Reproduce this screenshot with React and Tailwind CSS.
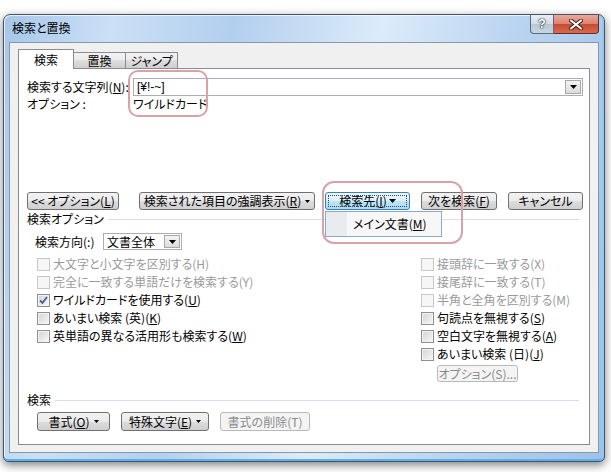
import React from 'react';

const jp = "font-['Noto_Sans_CJK_JP','Noto_Sans_CJK_SC',sans-serif] [font-feature-settings:'palt']";

function U({ children }) {
  return <span className="underline underline-offset-[1px] decoration-[1px]">{children}</span>;
}

function Arrow({ small }) {
  return small ? (
    <svg width="5" height="3" viewBox="0 0 5 3" className="ml-[4px]">
      <polygon points="0,0 5,0 2.5,3" fill="#000" />
    </svg>
  ) : (
    <svg width="7" height="4" viewBox="0 0 7 4">
      <polygon points="0,0 7,0 3.5,4" fill="#000" />
    </svg>
  );
}

function Btn({ children, className = '', disabled, focused, h = 'h-[18px]' }) {
  let look =
    'border-[#707070] bg-[linear-gradient(#f2f2f2_0%,#ebebeb_50%,#dddddd_50%,#cfcfcf_100%)] text-black';
  if (focused)
    look =
      'border-[#3c7fb1] bg-[linear-gradient(#eaf6fd_0%,#d9f0fc_50%,#bee6fd_50%,#a7d9f5_100%)] text-black';
  if (disabled) look = 'border-[#b6babd] bg-[#f4f4f4] text-[#8a8a8a]';
  return (
    <div
      className={`relative flex shrink-0 items-center justify-center rounded-[3px] border text-[12px] leading-none ${h} ${look} ${className}`}
    >
      {focused && <span className="absolute inset-[2px] border border-dotted border-[#444]" />}
      <span className="flex items-center">{children}</span>
    </div>
  );
}

function Check({ checked, disabled, children }) {
  return (
    <div className={`flex h-[18px] items-center ${disabled ? 'text-[#9a9a9a]' : 'text-black'}`}>
      <span
        className={`flex h-[13px] w-[13px] shrink-0 items-center justify-center border ${
          disabled
            ? 'border-[#c7c7c7] bg-[#f6f6f6]'
            : 'border-[#8f8f8f] bg-[linear-gradient(135deg,#d4d4d4,#f7f7f7)] shadow-[inset_0_0_0_1px_#f4f4f4]'
        }`}
      >
        {checked && (
          <svg width="9" height="9" viewBox="0 0 9 9">
            <path d="M1 4.5 L3.5 7 L8 1" fill="none" stroke="#4a5d8f" strokeWidth="1.8" />
          </svg>
        )}
      </span>
      <span className="ml-[3px] whitespace-nowrap">{children}</span>
    </div>
  );
}

function DropBtn() {
  return (
    <div className="flex h-full w-[16px] items-center justify-center border border-[#a8a8a8] bg-[linear-gradient(#f4f4f4,#dcdcdc)]">
      <Arrow />
    </div>
  );
}

function Group({ label }) {
  return (
    <div className="flex h-[16px] items-center">
      <span className="whitespace-nowrap">{label}</span>
      <span className="ml-[4px] mr-[5px] h-px flex-1 bg-[#d5dfe5]" />
    </div>
  );
}

export default function App() {
  return (
    <div className={`h-[472px] w-[611px] overflow-hidden bg-white pl-[3px] pt-[14px] text-[12px] leading-[16px] ${jp}`}>
      <div className="flex h-[448px] w-[602px] flex-col rounded-b-[5px] rounded-t-[7px] border border-[#45546a] bg-[linear-gradient(100deg,#a6c6e9_0%,#cbe0f6_16%,#b2cfee_34%,#dcebfa_56%,#b9d4f0_76%,#9fc1e8_100%)] shadow-[0_3px_10px_rgba(0,0,0,0.5),inset_0_-2px_0_#5cb3ec,inset_-2px_0_0_#8fcaf2,inset_1px_1px_0_rgba(255,255,255,0.7)]">
        {/* title bar */}
        <div className="flex h-[27px] items-start">
          <div className="pl-[8px] pt-[5px] text-[12px] text-black">検索と置換</div>
          <div className="ml-auto mr-[5px] flex">
            <div className="flex h-[19px] w-[24px] items-center justify-center rounded-bl-[4px] border border-t-0 border-[#5b6a7d] bg-[linear-gradient(#e9eef4_0%,#d3dce6_50%,#b9c6d4_50%,#c9d5e1_100%)] text-[13px] font-bold text-white [text-shadow:0_0_1px_#2c3440,0_0_1px_#2c3440,0_0_2px_#2c3440] font-['Liberation_Sans',sans-serif]">
              ?
            </div>
            <div className="flex h-[19px] w-[45px] items-center justify-center rounded-br-[4px] border border-l-0 border-t-0 border-[#6e2a20] bg-[linear-gradient(#eaa899_0%,#d98370_50%,#c74a33_50%,#d66a4f_100%)]">
              <svg width="14" height="11" viewBox="0 0 14 11">
                <path d="M2 1.5 L12 9.5 M12 1.5 L2 9.5" stroke="#3a1a14" strokeWidth="4" strokeLinecap="round" />
                <path d="M2 1.5 L12 9.5 M12 1.5 L2 9.5" stroke="#fff" strokeWidth="2.2" strokeLinecap="round" />
              </svg>
            </div>
          </div>
        </div>

        {/* client area */}
        <div className="mx-[5px] mb-[8px] flex flex-1 flex-col border border-[#8798ad] bg-[#f0f0f0] px-[8px] pb-[7px] pt-[6px]">
          {/* tabs */}
          <div className="flex h-[19px] items-end">
            <div className="relative z-10 -mb-px flex h-[20px] w-[56px] items-center justify-center border border-b-0 border-[#898c95] bg-white">
              検索
            </div>
            <div className="flex h-[16px] w-[52px] items-center justify-center border border-b-0 border-l-0 border-[#898c95] bg-[linear-gradient(#f2f2f2_0%,#ebebeb_50%,#dddddd_50%,#cfcfcf_100%)]">
              置換
            </div>
            <div className="flex h-[16px] w-[52px] items-center justify-center border border-b-0 border-l-0 border-[#898c95] bg-[linear-gradient(#f2f2f2_0%,#ebebeb_50%,#dddddd_50%,#cfcfcf_100%)]">
              ジャンプ
            </div>
          </div>

          {/* tab page */}
          <div className="relative flex flex-1 flex-col border border-[#898c95] bg-white pl-[8px] pr-[5px] pt-[9px]">
            <div className="flex h-[18px] items-center">
              <span className="w-[106px] whitespace-nowrap">
                検索する文字列(<U>N</U>):
              </span>
              <div className="flex h-[18px] w-[450px] items-center justify-between border border-[#abadb3] bg-white pl-[3px] pr-px py-px">
                <span className="font-['Liberation_Sans','Noto_Sans_CJK_JP',sans-serif] text-[12px]">[¥!-~]</span>
                <DropBtn />
              </div>
            </div>
            <div className="flex h-[16px] items-center">
              <span className="w-[106px] whitespace-nowrap">オプション :</span>
              <span>ワイルドカード</span>
            </div>

            <div className="mt-[80px] flex">
              <Btn className="w-[92px]">
                &lt;&lt; オプション(<U>L</U>)
              </Btn>
              <Btn className="ml-[20px] w-[176px]">
                検索された項目の強調表示(<U>R</U>)
                <Arrow small />
              </Btn>
              <Btn className="ml-[10px] w-[85px]" focused>
                検索先(<U>I</U>)
                <span className="ml-[2px]">
                  <Arrow />
                </span>
              </Btn>
              <Btn className="ml-[11px] w-[76px]">
                次を検索(<U>F</U>)
              </Btn>
              <Btn className="ml-[11px] w-[75px]">キャンセル</Btn>
            </div>

            <div className="mt-px">
              <Group label="検索オプション" />
            </div>

            <div className="mt-[6px] flex h-[17px] items-center pl-[8px]">
              <span className="w-[68px] whitespace-nowrap">検索方向(:)</span>
              <div className="flex h-[17px] w-[79px] items-center justify-between border border-[#abadb3] bg-white pl-[3px] pr-px py-px">
                <span>文書全体</span>
                <DropBtn />
              </div>
            </div>

            <div className="mt-[5px] flex pl-[10px]">
              <div className="flex w-[384px] flex-col">
                <Check disabled>大文字と小文字を区別する(H)</Check>
                <Check disabled>完全に一致する単語だけを検索する(Y)</Check>
                <Check checked>
                  ワイルドカードを使用する(<U>U</U>)
                </Check>
                <Check>
                  あいまい検索 (英)(<U>K</U>)
                </Check>
                <Check>
                  英単語の異なる活用形も検索する(<U>W</U>)
                </Check>
              </div>
              <div className="flex flex-col">
                <Check disabled>接頭辞に一致する(X)</Check>
                <Check disabled>接尾辞に一致する(T)</Check>
                <Check disabled>半角と全角を区別する(M)</Check>
                <Check>
                  句読点を無視する(<U>S</U>)
                </Check>
                <Check>
                  空白文字を無視する(<U>A</U>)
                </Check>
                <Check>
                  あいまい検索 (日)(<U>J</U>)
                </Check>
                <Btn className="ml-[16px] mt-[2px] w-[81px]" h="h-[17px]" disabled>
                  オプション(S)...
                </Btn>
              </div>
            </div>

            <div className="mt-[10px]">
              <Group label="検索" />
            </div>

            <div className="mt-[4px] flex pl-[10px]">
              <Btn className="w-[73px]" h="h-[19px]">
                書式(<U>O</U>)
                <Arrow small />
              </Btn>
              <Btn className="ml-[11px] w-[88px]" h="h-[19px]">
                特殊文字(<U>E</U>)
                <Arrow small />
              </Btn>
              <Btn className="ml-[11px] w-[90px]" h="h-[19px]" disabled>
                書式の削除(T)
              </Btn>
            </div>

            {/* drop-down menu of 検索先 */}
            <div className="absolute left-[306px] top-[142px] z-20 flex h-[26px] w-[117px] border border-[#86a9d6] bg-[#f7f7f7]">
              <div className="w-[21px] bg-[#e9ecee]" />
              <div className="flex items-center pl-[6px]">
                メイン文書(<U>M</U>)
              </div>
            </div>

            {/* annotation rings */}
            <div className="pointer-events-none absolute left-[109px] top-px z-30 h-[47px] w-[80px] rounded-[10px] border-2 border-[#d9a3a6]" />
            <div className="pointer-events-none absolute left-[303px] top-[112px] z-30 h-[63px] w-[141px] rounded-[12px] border-2 border-[#d9a3a6]" />
          </div>
        </div>
      </div>
    </div>
  );
}
